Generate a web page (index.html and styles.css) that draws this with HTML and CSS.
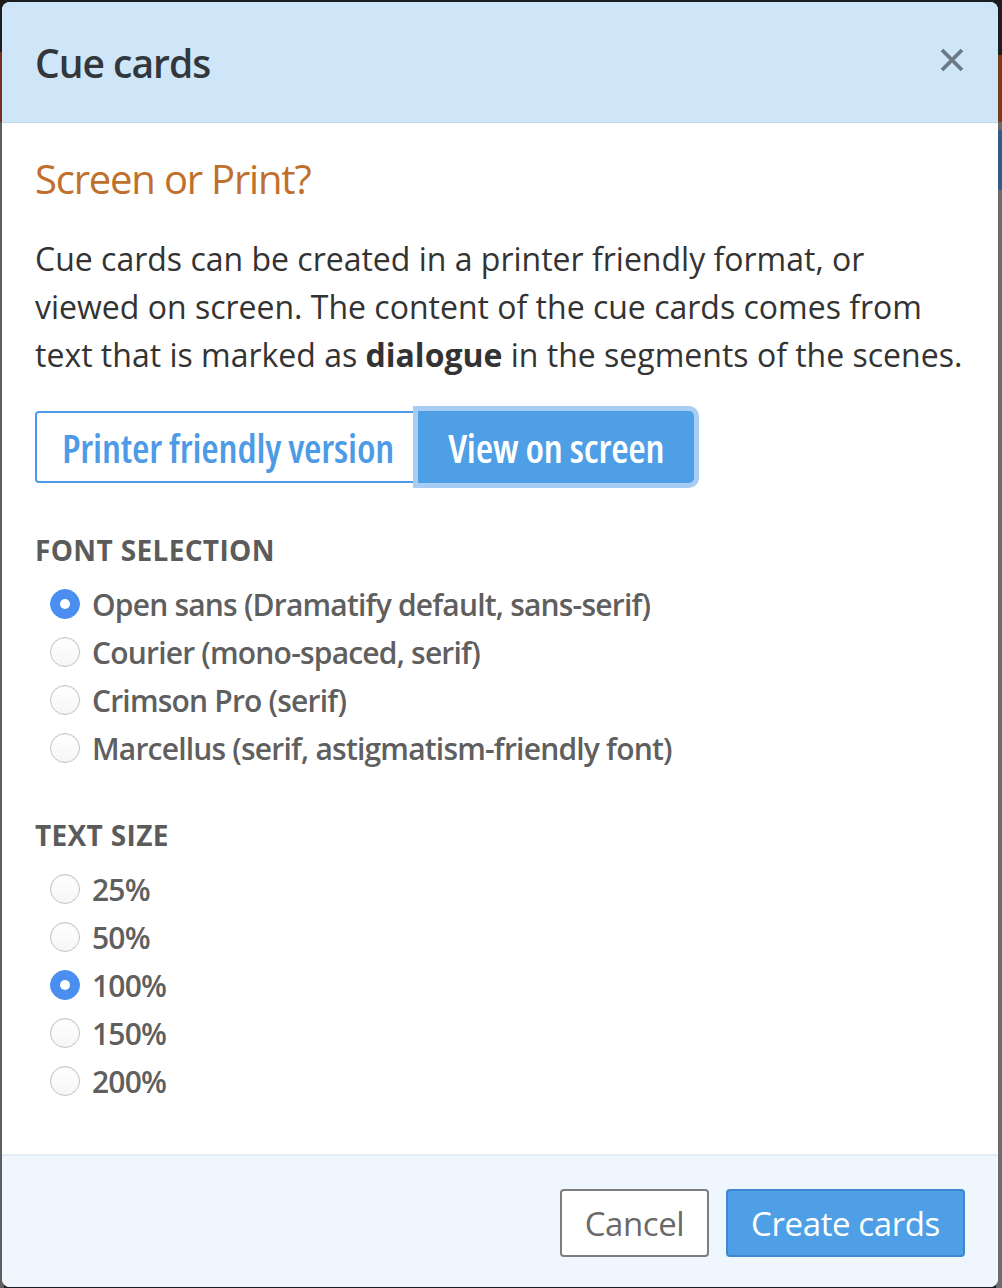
FILE: index.html
```html
<!DOCTYPE html>
<html lang="en">
<head>
<meta charset="utf-8">
<title>Cue cards</title>
<link rel="stylesheet" href="styles.css">
</head>
<body>
<div class="modal">
  <header class="modal-header">
    <h1 class="modal-title">Cue cards</h1>
    <button class="close" aria-label="Close">
      <svg width="24" height="24" viewBox="0 0 24 24"><path d="M2 2 L22 22 M22 2 L2 22" stroke="#6b7986" stroke-width="3.8" stroke-linecap="butt" fill="none"/></svg>
    </button>
  </header>
  <main class="modal-body">
    <h2 class="section-title">Screen or Print?</h2>
    <p class="intro">Cue cards can be created in a printer friendly format, or<br>viewed on screen. The content of the cue cards comes from<br>text that is marked as <b>dialogue</b> in the segments of the scenes.</p>
    <div class="btn-group">
      <button class="seg">Printer friendly version</button>
      <button class="seg active">View on screen</button>
    </div>
    <h3 class="group-label first">FONT SELECTION</h3>
    <ul class="radios">
      <li><span class="radio checked"></span>Open sans (Dramatify default, sans-serif)</li>
      <li><span class="radio"></span>Courier (mono-spaced, serif)</li>
      <li><span class="radio"></span>Crimson Pro (serif)</li>
      <li><span class="radio"></span>Marcellus (serif, astigmatism-friendly font)</li>
    </ul>
    <h3 class="group-label">TEXT SIZE</h3>
    <ul class="radios">
      <li><span class="radio"></span>25%</li>
      <li><span class="radio"></span>50%</li>
      <li><span class="radio checked"></span>100%</li>
      <li><span class="radio"></span>150%</li>
      <li><span class="radio"></span>200%</li>
    </ul>
  </main>
  <footer class="modal-footer">
    <button class="btn btn-cancel">Cancel</button>
    <button class="btn btn-primary">Create cards</button>
  </footer>
</div>
</body>
</html>
```

FILE: styles.css
```css
html, body {
  margin: 0;
  padding: 0;
}
body {
  width: 1002px;
  height: 1288px;
  overflow: hidden;
  font-family: "Open Sans", "Noto Sans", sans-serif;
  background:
    linear-gradient(to bottom, #1d1d1f 0, #1d1d1f 55px, #7a3b1a 55px, #7a3b1a 122px, #6a6a6a 122px, #6a6a6a 130px, #2f5a8a 130px, #2f5a8a 190px, #6b6b6b 190px) right / 6px 100% no-repeat,
    linear-gradient(to bottom, #1d1d1f 0, #1d1d1f 52px, #7a2f18 52px, #7a2f18 122px, #5f5f5f 122px) left / 4px 100% no-repeat,
    #1d1d1f;
}
.modal {
  margin: 2px 4px 0 2px;
  width: 996px;
  height: 1285px;
  background: #fff;
  border-radius: 8px;
  overflow: hidden;
  display: flex;
  flex-direction: column;
}
.modal-header {
  height: 120px;
  background: #cfe5f8;
  border-bottom: 1px solid #b9d8f1;
  display: flex;
  align-items: center;
  justify-content: space-between;
  padding: 0 34px 0 33px;
}
.modal-title {
  margin: 0;
  font-size: 39px;
  font-weight: 600;
  font-stretch: 88%;
  color: #32373c;
  letter-spacing: -1px;
}
.close {
  border: 0;
  background: none;
  padding: 0;
  width: 24px;
  height: 24px;
  display: flex;
  margin-top: -4px;
}
.modal-body {
  flex: 1;
  padding: 32px 20px 0 33px;
}
.section-title {
  margin: 0 0 32px;
  font-size: 40px;
  line-height: 48px;
  font-weight: 400;
  font-stretch: 88%;
  color: #c0702c;
  letter-spacing: -1.2px;
}
.intro {
  margin: 0 0 32px;
  font-size: 32px;
  line-height: 48px;
  letter-spacing: 0;
  color: #333;
  white-space: nowrap;
}
.intro b {
  font-weight: 700;
}
.btn-group {
  display: flex;
  height: 72px;
}
.seg {
  font-family: inherit;
  font-size: 40px;
  font-weight: 600;
  font-stretch: 75%;
  letter-spacing: -0.2px;
  border: 2px solid #4d9be6;
  background: #fff;
  color: #4d9be6;
  padding: 0 22px 0 25px;
  border-radius: 4px 0 0 4px;
  height: 72px;
  white-space: nowrap;
}
.seg.active {
  background: #4f9fe7;
  color: #fff;
  border-color: #4f9fe7;
  border-radius: 0 5px 5px 0;
  padding: 0 28px;
  box-shadow: 0 0 0 5px #a8cdf4;
  position: relative;
}
.group-label {
  margin: 47px 0 10px;
  font-size: 28px;
  line-height: 40px;
  font-weight: 700;
  font-stretch: 100%;
  color: #5b5b5b;
  letter-spacing: 0.35px;
}
.group-label:not(.first) {
  margin-top: 43px;
}
.radios {
  list-style: none;
  margin: 0;
  padding: 0 0 0 15px;
}
.radios li {
  display: flex;
  align-items: center;
  height: 48px;
  font-size: 30px;
  font-weight: 600;
  font-stretch: 100%;
  color: #5f5f5f;
  letter-spacing: -0.8px;
  white-space: nowrap;
}
.radio {
  width: 30px;
  height: 30px;
  box-sizing: border-box;
  border-radius: 50%;
  border: 1.5px solid #c2c2c2;
  background: linear-gradient(#fff, #f6f6f6);
  box-shadow: inset 0 1px 1px rgba(0,0,0,0.06);
  margin-right: 12px;
  flex: none;
  display: flex;
  align-items: center;
  justify-content: center;
}
.radio.checked {
  background: #4a8ef0;
  border-color: #4a8ef0;
  box-shadow: none;
}
.radio.checked::after {
  content: "";
  width: 10px;
  height: 10px;
  border-radius: 50%;
  background: #fff;
}
.modal-footer {
  border-top: 2px solid #e3edf8;
  background: #f0f6fd;
  height: 133px;
  box-sizing: border-box;
  padding: 33px 33px 0 0;
  display: flex;
  justify-content: flex-end;
  align-items: flex-start;
  gap: 17px;
}
.btn {
  font-family: inherit;
  height: 68px;
  font-size: 33px;
  font-weight: 400;
  font-stretch: 90%;
  letter-spacing: -0.4px;
  border-radius: 4px;
  padding: 0;
  white-space: nowrap;
}
.btn-cancel {
  background: #fff;
  color: #6a6a6a;
  border: 2px solid #7b7e82;
  width: 149px;
}
.btn-primary {
  background: #4f9fe7;
  color: #fff;
  border: 2px solid #3f88cf;
  width: 239px;
}
```
